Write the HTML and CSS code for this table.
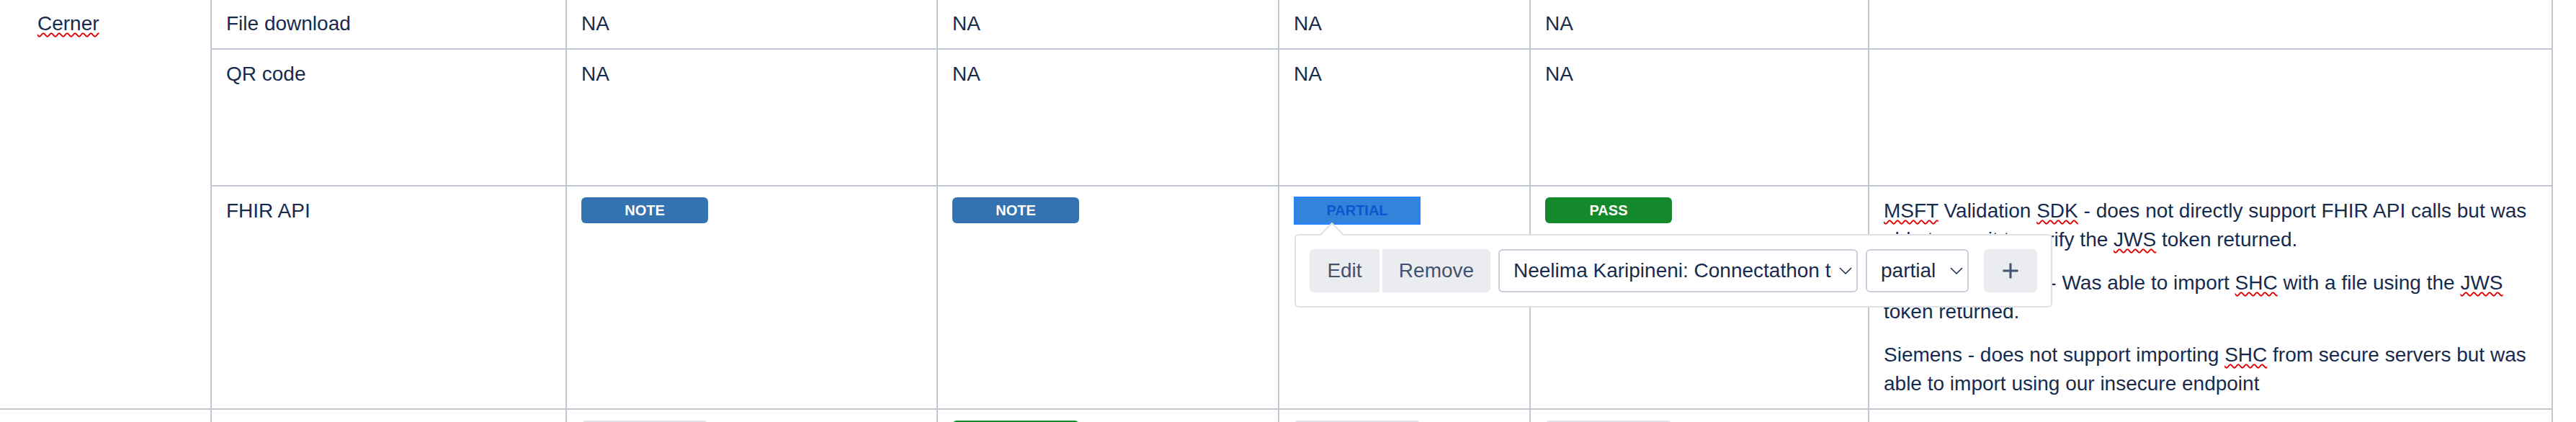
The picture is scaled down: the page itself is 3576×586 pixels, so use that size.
FILE: index.html
```html
<!DOCTYPE html>
<html lang="en">
<head>
<meta charset="utf-8">
<title>Connectathon results</title>
<link rel="stylesheet" href="styles.css">
</head>
<body>
<div class="matrix">
  <div class="cell vendor"><span class="misspelled">Cerner</span></div>

  <div class="cell">File download</div>
  <div class="cell">NA</div>
  <div class="cell">NA</div>
  <div class="cell">NA</div>
  <div class="cell">NA</div>
  <div class="cell"></div>

  <div class="cell">QR code</div>
  <div class="cell">NA</div>
  <div class="cell">NA</div>
  <div class="cell">NA</div>
  <div class="cell">NA</div>
  <div class="cell"></div>

  <div class="cell">FHIR API</div>
  <div class="cell"><span class="lozenge lozenge-blue">Note</span></div>
  <div class="cell"><span class="lozenge lozenge-blue">Note</span></div>
  <div class="cell">
    <div class="status-anchor">
      <div class="selection"><span class="lozenge lozenge-selected">Partial</span></div>
      <div class="popover">
        <svg class="popover-arrow" width="32" height="18" viewBox="0 0 32 18" aria-hidden="true">
          <polygon points="0,18 16,2 32,18" fill="#ffffff"/>
          <polyline points="0,17 16,1 32,17" fill="none" stroke="#dfe1e6" stroke-width="2"/>
        </svg>
        <div class="btn-group">
          <button class="btn btn-edit" type="button">Edit</button>
          <button class="btn btn-remove" type="button">Remove</button>
        </div>
        <div class="select select-wide">
          <span class="select-value">Neelima Karipineni: Connectathon testing</span>
          <svg class="chevron" width="18" height="10" viewBox="0 0 18 10" aria-hidden="true"><polyline points="1,1 9,9 17,1" fill="none" stroke="#172b4d" stroke-width="1.5"/></svg>
        </div>
        <div class="select select-narrow">
          <span class="select-value">partial</span>
          <svg class="chevron" width="18" height="10" viewBox="0 0 18 10" aria-hidden="true"><polyline points="1,1 9,9 17,1" fill="none" stroke="#172b4d" stroke-width="1.5"/></svg>
        </div>
        <button class="btn btn-add" type="button" aria-label="Add">
          <svg width="24" height="24" viewBox="0 0 24 24" aria-hidden="true"><path d="M12 1.5v21M1.5 12h21" stroke="#42526e" stroke-width="3" fill="none"/></svg>
        </button>
      </div>
    </div>
  </div>
  <div class="cell"><span class="lozenge lozenge-green">Pass</span></div>
  <div class="cell notes">
    <p><span class="misspelled">MSFT</span> Validation <span class="misspelled">SDK</span> - does not directly support FHIR API calls but was able to use it to verify the <span class="misspelled">JWS</span> token returned.</p>
    <p>Epic MyChart app - Was able to import <span class="misspelled">SHC</span> with a file using the <span class="misspelled">JWS</span> token returned.</p>
    <p>Siemens - does not support importing <span class="misspelled">SHC</span> from secure servers but was able to import using our insecure endpoint</p>
  </div>

  <div class="cell vendor-next"></div>
  <div class="cell"></div>
  <div class="cell"><span class="lozenge lozenge-grey">NA</span></div>
  <div class="cell"><span class="lozenge lozenge-green">Pass</span></div>
  <div class="cell"><span class="lozenge lozenge-grey">NA</span></div>
  <div class="cell"><span class="lozenge lozenge-grey">NA</span></div>
  <div class="cell"></div>
</div>
</body>
</html>
```

FILE: styles.css
```css
html, body {
  margin: 0;
  padding: 0;
  overflow: hidden;
  background: #ffffff;
}

body {
  font-family: "Liberation Sans", Arial, sans-serif;
  font-size: 28px;
  line-height: 40px;
  color: #172b4d;
}

.matrix {
  display: grid;
  grid-template-columns: 294px 493px 515px 474px 349px 470px 949px;
  grid-template-rows: auto 190px auto auto;
  margin-top: -1px;
}

.cell {
  box-sizing: border-box;
  min-width: 0;
  padding: 14px 20px;
  border-right: 2px solid #c1c7d0;
  border-bottom: 2px solid #c1c7d0;
}

.vendor {
  grid-row: 1 / span 3;
  padding-left: 52px;
}

.vendor-next {
  padding-left: 52px;
  min-height: 80px;
}

.misspelled {
  text-decoration: underline wavy #e00000;
  text-decoration-thickness: 1.5px;
  text-underline-offset: 3px;
  text-decoration-skip-ink: none;
}

.notes p {
  margin: 0;
}

.notes p + p {
  margin-top: 20px;
}

/* status lozenges */
.lozenge {
  display: block;
  box-sizing: border-box;
  width: 176px;
  height: 36px;
  margin-top: 1px;
  border-radius: 6px;
  font-size: 20px;
  font-weight: 700;
  line-height: 36px;
  text-align: center;
  text-transform: uppercase;
  color: #ffffff;
}

.lozenge-blue {
  background: #3572b0;
}

.lozenge-green {
  background: #14892c;
}

.lozenge-grey {
  background: #dfe1e6;
  color: #42526e;
}

.status-anchor {
  position: relative;
  width: 176px;
}

.selection {
  box-sizing: border-box;
  width: 176px;
  padding: 2px;
  background: #2684ff;
}

.lozenge-selected {
  width: 100%;
  height: 35px;
  margin-top: 0;
  line-height: 35px;
  background: #3383da;
  color: #0b57cf;
}

/* floating toolbar */
.popover {
  position: absolute;
  top: 52px;
  left: 1px;
  z-index: 10;
  display: flex;
  align-items: center;
  padding: 19px;
  border: 2px solid #dfe1e6;
  border-radius: 6px;
  background: #ffffff;
  white-space: nowrap;
}

.popover-arrow {
  position: absolute;
  top: -18px;
  left: 34px;
}

.btn-group {
  display: flex;
  gap: 4px;
}

.btn {
  box-sizing: border-box;
  height: 60px;
  padding: 0;
  border: 0;
  background: #ebecf0;
  color: #42526e;
  font-family: "Liberation Sans", Arial, sans-serif;
  font-size: 28px;
  line-height: 60px;
  text-align: center;
}

.btn-edit {
  width: 97px;
  border-radius: 6px 0 0 6px;
}

.btn-remove {
  width: 150px;
  border-radius: 0 6px 6px 0;
}

.btn-add {
  display: flex;
  align-items: center;
  justify-content: center;
  width: 74px;
  margin-left: 21px;
  border-radius: 6px;
}

.select {
  box-sizing: border-box;
  display: flex;
  align-items: center;
  height: 60px;
  margin-left: 11px;
  padding: 0 6px 0 19px;
  border: 2px solid #c9ced8;
  border-radius: 6px;
  color: #172b4d;
  line-height: 40px;
}

.select-wide {
  width: 499px;
}

.select-narrow {
  width: 143px;
}

.select-value {
  flex: 1;
  min-width: 0;
  overflow: hidden;
  white-space: nowrap;
}

.chevron {
  flex: none;
  margin-left: 10px;
}
```
